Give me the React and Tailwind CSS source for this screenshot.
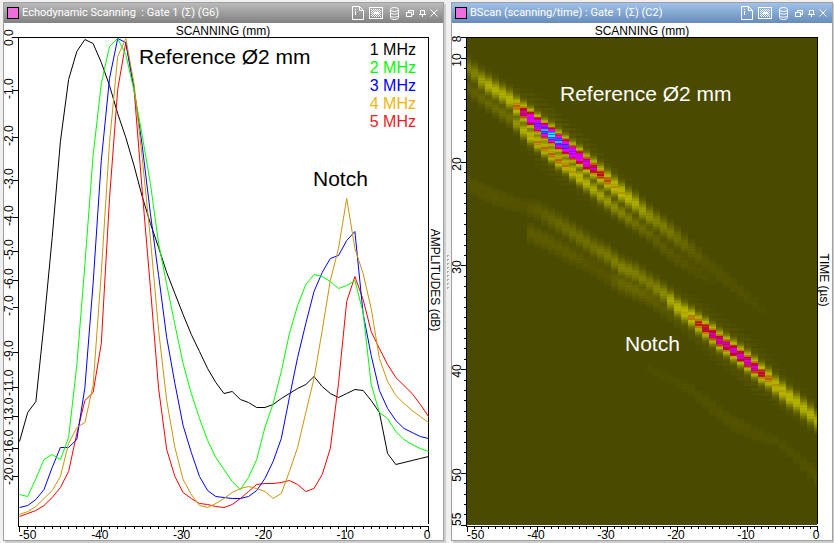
import React from "react";

/* Curve heights are measured downwards from the 0 dB line, one value per mm of scan. */
const CURVES = [
  {
    name: "1 MHz",
    stroke: "#000000",
    points: [403, 374, 363, 285, 199, 103, 41, 13, 1, 5, 24, 47, 75, 99, 127, 158, 185, 209, 234, 255, 276, 296, 313, 330, 344, 355, 353, 361, 364, 369, 369, 366, 360, 355, 350, 346, 338, 348, 355, 359, 355, 351, 352, 362, 374, 415, 426, 424, 422, 420, 418],
  },
  {
    name: "5 MHz",
    stroke: "#ff0000",
    points: [478, 475, 472, 467, 459, 449, 433, 395, 362, 354, 305, 160, 51, 4, 50, 152, 249, 350, 411, 438, 454, 460, 465, 466, 468, 469, 466, 460, 453, 446, 445, 445, 444, 442, 446, 453, 450, 436, 410, 345, 263, 238, 261, 293, 310, 326, 339, 347, 355, 366, 378],
  },
  {
    name: "3 MHz",
    stroke: "#0000ff",
    points: [469, 467, 461, 451, 429, 409, 409, 401, 349, 245, 122, 40, 0, 4, 50, 107, 175, 237, 299, 345, 387, 414, 438, 452, 458, 459, 460, 460, 458, 452, 440, 423, 400, 359, 319, 285, 253, 234, 220, 217, 202, 193, 275, 317, 352, 370, 382, 390, 394, 398, 400],
  },
  {
    name: "2 MHz",
    stroke: "#00ff00",
    points: [456, 458, 440, 421, 416, 421, 399, 327, 226, 117, 45, 8, 0, 16, 52, 97, 145, 205, 246, 286, 325, 355, 380, 402, 419, 431, 443, 451, 439, 421, 389, 365, 333, 295, 267, 246, 236, 238, 243, 250, 247, 242, 274, 346, 374, 380, 393, 401, 406, 410, 413],
  },
  {
    name: "4 MHz",
    stroke: "#c8960a",
    points: [476, 473, 468, 460, 452, 438, 405, 389, 384, 347, 234, 104, 18, 0, 45, 119, 200, 292, 362, 409, 441, 456, 467, 469, 465, 460, 454, 450, 448, 450, 453, 460, 455, 433, 409, 374, 340, 292, 242, 210, 160, 210, 235, 270, 320, 343, 357, 365, 372, 378, 384],
  },
];

const LEGEND = [
  ["1 MHz", "#000000"],
  ["2 MHz", "#00ff00"],
  ["3 MHz", "#0000ff"],
  ["4 MHz", "#efb50e"],
  ["5 MHz", "#ed1c24"],
];

const DECIBELS = [0, -1, -2, -3, -4, -5, -6, -7, -9, -11, -13, -16, -20];

/* Echo ridges: [scan column, height, strength], interpolated between entries. */
const RIDGES = [
  {
    spread: 6,
    nodes: [[0, 30, 0.13], [1, 35, 0.15], [2, 42, 0.22], [3, 47, 0.27], [5, 56, 0.27], [6, 61, 0.3], [7, 68, 0.42], [8, 74, 0.6], [9, 80, 0.78], [10, 86, 0.88], [11, 92, 0.97], [12, 97, 1.06], [13, 103, 0.98], [14, 108, 0.9], [15, 114, 0.83], [16, 119, 0.75], [17, 125, 0.68], [18, 130, 0.58], [19, 136, 0.5], [20, 142, 0.44], [21, 148, 0.37], [22, 154, 0.35], [23, 160, 0.29], [24, 165, 0.26], [25, 172, 0.22], [26, 178, 0.18], [27, 183, 0.15], [29, 194, 0.12], [31, 206, 0.08], [32, 212, 0.06], [34, 224, 0.03], [38, 247, 0.02], [42, 271, 0.01], [43, 277, 0]],
  },
  {
    spread: 5,
    nodes: [[0, 49, 0.05], [3, 65, 0.08], [6, 79, 0.1], [7, 85, 0.2], [8, 92, 0.28], [9, 98, 0.34], [10, 104, 0.4], [12, 116, 0.42], [13, 122, 0.42], [14, 127, 0.4], [15, 133, 0.36], [16, 139, 0.34], [17, 145, 0.28], [19, 157, 0.24], [21, 169, 0.18], [23, 180, 0.13], [24, 185, 0.1], [26, 195, 0.07], [28, 209, 0.05], [30, 220, 0.035], [33, 234, 0.02], [35, 243, 0.01], [36, 248, 0]],
  },
  {
    spread: 6,
    nodes: [[0, 146, 0.025], [4, 159, 0.03], [8, 168, 0.02], [10, 172, 0.045], [13, 185, 0.08], [16, 199, 0.1], [18, 209, 0.1], [20, 217, 0.13], [22, 229, 0.15], [24, 235, 0.14], [26, 245, 0.13], [28, 255, 0.17], [29, 262, 0.26], [30, 269, 0.3], [31, 274, 0.34], [32, 279, 0.4], [33, 285, 0.48], [34, 290, 0.54], [35, 296, 0.6], [36, 302, 0.62], [37, 307, 0.61], [38, 312, 0.64], [40, 323, 0.64], [41, 329, 0.62], [42, 335, 0.52], [43, 340, 0.42], [44, 347, 0.36], [46, 359, 0.33], [47, 364, 0.3], [50, 382, 0.27]],
  },
  {
    spread: 6,
    nodes: [[8, 190, 0], [9, 195, 0.05], [12, 205, 0.05], [15, 217, 0.045], [17, 225, 0.03], [20, 238, 0.03], [22, 245, 0.08], [24, 251, 0.08], [26, 258, 0.06], [28, 269, 0.04], [30, 281, 0.03], [33, 298, 0.02], [40, 342, 0.01]],
  },
  {
    spread: 6,
    nodes: [[25, 328, 0], [26, 330, 0.01], [28, 337, 0.01], [32, 352, 0.014], [35, 370, 0.02], [38, 385, 0.024], [41, 395, 0.018], [44, 402, 0.014], [47, 419, 0.016], [49, 432, 0.025], [50, 438, 0.035]],
  },
];

const PALETTE = [
  [0, 75, 75, 0],
  [0.27, 176, 176, 0],
  [0.32, 184, 180, 0],
  [0.36, 184, 140, 0],
  [0.42, 184, 92, 10],
  [0.47, 184, 20, 12],
  [0.53, 200, 0, 60],
  [0.57, 196, 0, 190],
  [0.7, 240, 0, 230],
  [0.78, 200, 0, 255],
  [0.85, 110, 10, 255],
  [0.92, 0, 120, 255],
  [1, 0, 255, 255],
];

function paletteColour(value) {
  const v = Math.min(1, value);
  for (let i = 1; i < PALETTE.length; i++) {
    const [b, ...hi] = PALETTE[i];
    const [a, ...lo] = PALETTE[i - 1];
    if (v <= b) {
      const t = (v - a) / (b - a);
      return `rgb(${hi.map((c, n) => Math.round((lo[n] + (c - lo[n]) * t) / 3) * 3).join(",")})`;
    }
  }
  return "rgb(0,255,255)";
}

function ridgeAt(nodes, column) {
  for (let i = 1; i < nodes.length; i++) {
    const [c0, y0, s0] = nodes[i - 1];
    const [c1, y1, s1] = nodes[i];
    if (column >= c0 && column <= c1) {
      const t = (column - c0) / (c1 - c0);
      return [y0 + (y1 - y0) * t, s0 + (s1 - s0) * t];
    }
  }
  return null;
}

const BACKGROUND = "rgb(75,75,0)";

function buildCells() {
  const cells = [];
  for (let column = 0; column <= 50; column++) {
    const here = RIDGES.map((r) => [r.spread, ridgeAt(r.nodes, column)]).filter((r) => r[1]);
    const left = Math.max(0, column * 7 - 3);
    const right = Math.min(350, column * 7 + 4);
    let run = null;
    for (let row = 0; row < 487; row++) {
      let value = 0;
      for (const [spread, [y, strength]] of here) {
        const d = row - y;
        value = Math.max(value, strength * Math.exp((-d * d) / (2 * spread * spread)));
        value = Math.max(value, strength * 0.07 * Math.exp((-d * d) / 450) * (row % 5 < 3 ? 1 : 0.4));
      }
      value *= row % 3 === 0 ? 0.88 : 1;
      const fill = value < 0.008 ? BACKGROUND : paletteColour(value);
      if (run && run.fill === fill) {
        run.height += 1;
      } else {
        if (run && run.fill !== BACKGROUND) cells.push(run);
        run = { x: left, width: right - left, y: row, height: 1, fill };
      }
    }
    if (run && run.fill !== BACKGROUND) cells.push(run);
  }
  return cells;
}

const CELLS = buildCells();

function DocIcon() {
  return (
    <svg width="12" height="14" viewBox="0 0 12 14" fill="none" stroke="white" aria-hidden="true">
      <path d="M.5 .5h7l4 4v9H.5zM7.5 .5v4h4" />
      <path d="M3.5 3v1M3.5 5v4" />
    </svg>
  );
}

function ImageIcon() {
  return (
    <svg width="14" height="12" viewBox="0 0 14 12" fill="none" stroke="white" shapeRendering="crispEdges" aria-hidden="true">
      <path d="M.5 .5h13v11H.5z" />
      {[2, 3, 4, 5, 6, 7, 8, 9].map((y) => (
        <path key={y} d={y % 2 ? `M3 ${y}.5H12` : `M2 ${y}.5H12`} strokeDasharray="1 1" />
      ))}
      <path d="M4 6.5h6M6 5.5h3" />
    </svg>
  );
}

function DatabaseIcon() {
  return (
    <svg width="9" height="13" viewBox="0 0 9 13" fill="none" stroke="white" aria-hidden="true">
      <ellipse cx="4.5" cy="2.5" rx="4" ry="2" />
      <path d="M.5 2.5v8c0 2.600 8 2.600 8 0v-8M.5 5.500c0 2.200 8 2.200 8 0M.5 8.500c0 2.200 8 2.200 8 0" />
    </svg>
  );
}

function RestoreIcon() {
  return (
    <svg width="8" height="7" viewBox="0 0 8 7" fill="none" stroke="white" shapeRendering="crispEdges" aria-hidden="true">
      <path d="M.5 2.500h5v4h-5zM2.500 2V.5h5v4H6" />
    </svg>
  );
}

function PinIcon() {
  return (
    <svg width="7" height="7" viewBox="0 0 7 7" fill="none" stroke="white" shapeRendering="crispEdges" aria-hidden="true">
      <path d="M1.500 4V.5h4V4M0 4.500h7M3.500 4v3" />
    </svg>
  );
}

function CloseIcon() {
  return (
    <svg width="8" height="8" viewBox="0 0 8 8" fill="none" stroke="white" aria-hidden="true">
      <path d="M.5 .5l7 7M7.5 .5l-7 7" />
    </svg>
  );
}

const LARGE_TOOLS = [["Information", DocIcon], ["Image", ImageIcon], ["Data", DatabaseIcon]];
const SMALL_TOOLS = [["Restore", RestoreIcon], ["Pin", PinIcon], ["Close", CloseIcon]];

function Panel({ title, barClass, children }) {
  return (
    <section className="min-w-0 self-start border border-[#a0a0a0] bg-white shadow-[2px_2px_0_#cdcdcd]">
      <header className={`flex h-5 items-center px-[3px] ${barClass}`}>
        <span className="h-3 w-3 shrink-0 border border-black bg-[#ee6ee0]" />
        <h2 className="ml-[3px] min-w-0 flex-1 truncate whitespace-pre font-[Roboto,'Noto_Sans',sans-serif] text-[11px] leading-5 text-white">
          {title}
        </h2>
        <div className="flex shrink-0">
          {LARGE_TOOLS.map(([label, Icon]) => (
            <button key={label} type="button" aria-label={label} className="flex h-5 w-[18px] items-center justify-center">
              <Icon />
            </button>
          ))}
        </div>
        <div className="ml-px flex shrink-0">
          {SMALL_TOOLS.map(([label, Icon]) => (
            <button key={label} type="button" aria-label={label} className="flex h-5 w-3 items-center justify-center">
              <Icon />
            </button>
          ))}
        </div>
      </header>
      {children}
    </section>
  );
}

function ScanAxis({ width }) {
  const ticks = Array.from({ length: 51 }, (_, i) => i);
  return (
    <g>
      <g shapeRendering="crispEdges">
        <rect x="-1" y="488" width={width + 1} height="1" />
        {ticks.map((i) => (
          <rect key={i} x={Math.round((i * width) / 50)} y="488" width="1" height={i % 10 === 0 ? 6 : 3} />
        ))}
      </g>
      {[-50, -40, -30, -20, -10, 0].map((mm) => (
        <text key={mm} x={mm === -50 ? 0 : ((mm + 50) * width) / 50 - 1} y="501" textAnchor={mm === -50 ? "start" : "middle"}>
          {mm}
        </text>
      ))}
    </g>
  );
}

function Frame({ width }) {
  return (
    <g shapeRendering="crispEdges">
      <rect x="-1" y="-1" width={width + 2} height="1" />
      <rect x="-1" y="-1" width="1" height="489" />
      <rect x={width} y="-1" width="1" height="487" />
    </g>
  );
}

const CHART_TEXT = "block h-auto w-full overflow-visible font-['Liberation_Sans',Arial,sans-serif] text-[12px]";

function EchoChart() {
  return (
    <svg viewBox="-15 -15 439 517" className={CHART_TEXT} role="img" aria-label="Echodynamic curves">
      <Frame width={409} />
      <ScanAxis width={409} />
      <text x="204" y="-3" textAnchor="middle">SCANNING (mm)</text>
      <text transform="translate(412 242) rotate(90)" textAnchor="middle">AMPLITUDES (dB)</text>
      {DECIBELS.map((db) => {
        const y = Math.round(488 * (1 - Math.pow(10, db / 20)));
        return (
          <g key={db}>
            <rect x="-6" y={y - 1} width="5" height="1" shapeRendering="crispEdges" />
            <text transform={`translate(-6 ${y + 8}) rotate(-90)`}>{db.toFixed(1)}</text>
          </g>
        );
      })}
      {CURVES.map((curve) => (
        <polyline
          key={curve.name}
          fill="none"
          stroke={curve.stroke}
          strokeWidth="1"
          points={curve.points.map((y, i) => `${(i * 8.18 + 0.5).toFixed(1)},${y + 0.5}`).join(" ")}
        />
      ))}
      <text x="120" y="26" className="text-[21px]">Reference Ø2 mm</text>
      <text x="294" y="148" className="text-[21px]">Notch</text>
      {LEGEND.map(([label, fill], i) => (
        <text key={label} x="397" y={17 + i * 18} fill={fill} textAnchor="end" className="text-[16px]">
          {label}
        </text>
      ))}
    </svg>
  );
}

function BScanChart() {
  const times = Array.from({ length: 48 }, (_, i) => i + 8);
  return (
    <svg viewBox="-15 -15 380 517" className={CHART_TEXT} role="img" aria-label="BScan image">
      <g shapeRendering="crispEdges">
        <rect width="350" height="487" fill={BACKGROUND} />
        {CELLS.map((c, i) => (
          <rect key={i} {...c} />
        ))}
      </g>
      <Frame width={350} />
      <ScanAxis width={350} />
      <text x="175" y="-3" textAnchor="middle">SCANNING (mm)</text>
      <text transform="translate(353 242) rotate(90)" textAnchor="middle">TIME (µs)</text>
      {times.map((t) => {
        const y = Math.round((t - 8) * 10.38);
        const major = t % 10 === 0 || t === 8 || t === 55;
        return (
          <g key={t}>
            <rect x={major ? -6 : -3} y={y - 1} width={major ? 5 : 2} height="1" shapeRendering="crispEdges" />
            {major && (
              <text transform={`translate(-6 ${t === 55 ? y : y + 1}) rotate(-90)`} textAnchor={t === 55 ? "start" : "middle"}>
                {t}
              </text>
            )}
          </g>
        );
      })}
      <text x="93" y="63" fill="white" className="text-[21px]">Reference Ø2 mm</text>
      <text x="158" y="313" fill="white" className="text-[21px]">Notch</text>
    </svg>
  );
}

export default function App() {
  return (
    <main className="grid min-h-screen grid-cols-[441fr_7px_382fr] overflow-x-clip bg-[#f0f0f0] pt-[2px] pr-px pb-[2px] pl-[3px]">
      <Panel title="Echodynamic Scanning  : Gate 1 (Σ) (G6)" barClass="bg-linear-to-b from-[#bababa] to-[#828282]">
        <EchoChart />
      </Panel>
      <div role="separator" aria-orientation="vertical" className="flex flex-col items-center justify-center gap-[2px] pl-px">
        {Array.from({ length: 9 }, (_, i) => (
          <span key={i} className="h-[2px] w-[2px] border-t border-l border-[#a8a8a8] bg-white" />
        ))}
      </div>
      <Panel title="BScan (scanning/time) : Gate 1 (Σ) (C2)" barClass="bg-linear-to-b from-[#a0c2ea] to-[#688cb8]">
        <BScanChart />
      </Panel>
    </main>
  );
}
